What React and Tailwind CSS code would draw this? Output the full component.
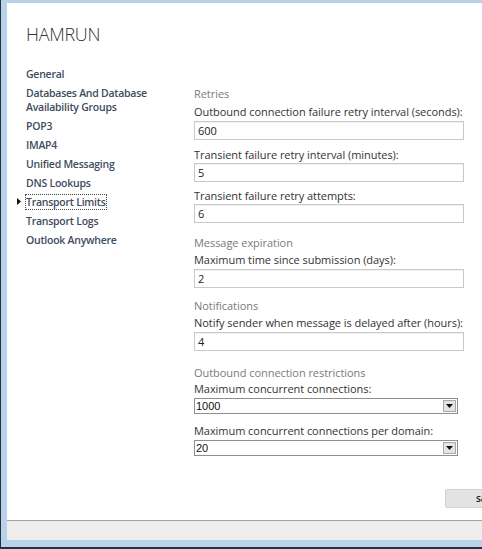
const navItems = [
  'General',
  'Databases And Database Availability Groups',
  'POP3',
  'IMAP4',
  'Unified Messaging',
  'DNS Lookups',
  'Transport Limits',
  'Transport Logs',
  'Outlook Anywhere',
];

const TextField = ({ value, className = '' }) => (
  <div
    className={`${className} h-[19px] w-[270px] border border-[#c9c9c9] bg-white pl-[3px] text-[11px] leading-[17px] text-[#222] shadow-[inset_0_1px_1px_rgba(0,0,0,0.06)]`}
  >
    {value}
  </div>
);

const SelectField = ({ value, className = '' }) => (
  <div
    className={`${className} flex h-[16px] w-[264px] items-stretch border border-[#8f8f8f] bg-white text-[11px] leading-[14px] text-[#111]`}
    style={{ fontFamily: '"Liberation Sans", Arial, sans-serif' }}
  >
    <div className="flex-1 pl-[1px]">{value}</div>
    <div className="m-[1px] flex w-[13px] items-center justify-center border border-[#a8a8a8] bg-[#e4e4e4]">
      <svg width="7" height="4" viewBox="0 0 7 4">
        <path d="M0 0h7L3.5 4z" fill="#111" />
      </svg>
    </div>
  </div>
);

const App = () => {
  return (
    <div
      className="flex h-[549px] w-[482px] flex-col overflow-hidden border-b-2 border-l border-[#22313f] bg-[#b9d1ea] pb-[7px] pl-[6px] pt-[3px]"
      style={{ fontFamily: '"Open Sans", "Noto Sans", sans-serif' }}
    >
      <div className="flex flex-1 flex-col overflow-hidden bg-white">
        <div className="flex-1 pl-[19px]">
          <h1 className="mt-[19px] text-[18px] font-light leading-[24px] tracking-[-0.3px] text-[#333]">HAMRUN</h1>
          <div className="mt-[21px] flex">
            <nav className="flex w-[168px] flex-col gap-[5px] text-[10.5px] font-semibold leading-[14px] tracking-[-0.25px] text-[#3e4c5e]">
              {navItems.map((item) => (
                <div key={item} className="relative">
                  {item === 'Transport Limits' ? (
                    <>
                      <svg className="absolute left-[-9px] top-[3px]" width="4" height="7" viewBox="0 0 4 7">
                        <path d="M0 0l4 3.5L0 7z" fill="#111" />
                      </svg>
                      <span className="outline-1 outline-dotted outline-[#444]">{item}</span>
                    </>
                  ) : item.startsWith('Databases') ? (
                    <span>
                      Databases And Database
                      <br />
                      Availability Groups
                    </span>
                  ) : (
                    item
                  )}
                </div>
              ))}
            </nav>

            <form className="mt-[20px] flex flex-col text-[11px] leading-[14px] tracking-[-0.05px] text-[#333]">
              <div className="text-[#7a7a7a]">Retries</div>
              <label className="mt-[4px]">Outbound connection failure retry interval (seconds):</label>
              <TextField value="600" className="mt-[2px]" />
              <label className="mt-[8px]">Transient failure retry interval (minutes):</label>
              <TextField value="5" className="mt-[1px]" />
              <label className="mt-[7px]">Transient failure retry attempts:</label>
              <TextField value="6" className="mt-[1px]" />

              <div className="mt-[13px] text-[#7a7a7a]">Message expiration</div>
              <label className="mt-[3px]">Maximum time since submission (days):</label>
              <TextField value="2" className="mt-[2px]" />

              <div className="mt-[11px] text-[#7a7a7a]">Notifications</div>
              <label className="mt-[3px]">Notify sender when message is delayed after (hours):</label>
              <TextField value="4" className="mt-[2px]" />

              <div className="mt-[15px] text-[#7a7a7a]">Outbound connection restrictions</div>
              <label className="mt-[2px]">Maximum concurrent connections:</label>
              <SelectField value="1000" className="mt-[2px]" />
              <label className="mt-[10px]">Maximum concurrent connections per domain:</label>
              <SelectField value="20" className="mt-[2px]" />
            </form>
          </div>
        </div>

        <div className="flex h-[31px] shrink-0 pl-[438px]">
          <button
            type="button"
            className="h-[19px] w-[80px] shrink-0 rounded-[2px] border border-[#d2d2d2] bg-[#e3e3e3] pl-[30px] text-left text-[10px] font-semibold leading-[17px] text-[#222]"
          >
            save
          </button>
        </div>
        <div className="h-[20px] shrink-0 border-t border-[#a3a3a3] bg-[#f0eeed]" />
      </div>
    </div>
  );
};

export default App;
